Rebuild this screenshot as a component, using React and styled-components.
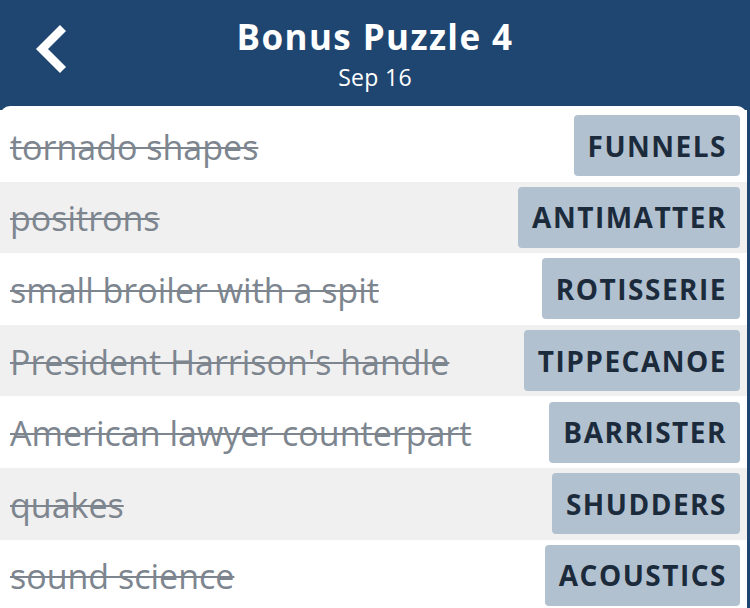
import React from "react";
import styled, { createGlobalStyle } from "styled-components";

const Global = createGlobalStyle`
  html, body { margin: 0; padding: 0; background: #ffffff; }
  body { font-family: "Open Sans", "Liberation Sans", sans-serif; }
  * { box-sizing: border-box; }
`;

const Screen = styled.div`
  width: 750px;
  height: 608px;
  overflow: hidden;
  background: #1f4671;
  display: flex;
  flex-direction: column;
`;

const Header = styled.header`
  height: 106px;
  flex: none;
  display: grid;
  grid-template-columns: 100px 1fr 100px;
  align-items: center;
  color: #ffffff;
`;

const BackButton = styled.button`
  background: none;
  border: none;
  padding: 0 0 0 34px;
  height: 100%;
  display: flex;
  align-items: center;
  justify-content: flex-start;
  cursor: pointer;
  margin-top: -6px;
`;

const TitleBlock = styled.div`
  display: flex;
  flex-direction: column;
  align-items: center;
  margin-top: 0px;
`;

const Title = styled.h1`
  margin: 0;
  font-size: 35px;
  font-weight: 700;
  line-height: 44px;
  letter-spacing: 1.4px;
`;

const Subtitle = styled.div`
  font-size: 23px;
  line-height: 30px;
  margin-top: 3px;
  letter-spacing: 0.3px;
`;

const Card = styled.main`
  flex: 1;
  width: 747px;
  background: #ffffff;
  border-radius: 10px 10px 0 0;
  padding-top: 4px;
`;

const Row = styled.div`
  height: 71.6px;
  display: flex;
  align-items: center;
  justify-content: space-between;
  padding: 0 7px 0 10px;
  background: ${(p) => (p.$shaded ? "#f0f0f0" : "#ffffff")};
`;

const Clue = styled.span`
  font-size: 34px;
  color: #7d858f;
  text-decoration: line-through;
  text-decoration-thickness: 2px;
  white-space: nowrap;
  margin-top: 2px;
`;

const Answer = styled.span`
  height: 61px;
  display: flex;
  align-items: center;
  padding: 0 13px 0 14px;
  background: #b1c1cf;
  color: #1c2b3c;
  font-size: 28px;
  font-weight: 700;
  border-radius: 4px;
  letter-spacing: 1.5px;
`;

const rows = [
  ["tornado shapes", "FUNNELS"],
  ["positrons", "ANTIMATTER"],
  ["small broiler with a spit", "ROTISSERIE"],
  ["President Harrison's handle", "TIPPECANOE"],
  ["American lawyer counterpart", "BARRISTER"],
  ["quakes", "SHUDDERS"],
  ["sound science", "ACOUSTICS"],
];

export default function App() {
  return (
    <>
      <Global />
      <Screen>
        <Header>
          <BackButton aria-label="Back">
            <svg width="34" height="52" viewBox="0 0 34 52">
              <path
                d="M29 4 L8 25 L29 46"
                fill="none"
                stroke="#ffffff"
                strokeWidth="8.5"
                strokeLinejoin="miter"
              />
            </svg>
          </BackButton>
          <TitleBlock>
            <Title>Bonus Puzzle 4</Title>
            <Subtitle>Sep 16</Subtitle>
          </TitleBlock>
          <div />
        </Header>
        <Card>
          {rows.map(([clue, ans], i) => (
            <Row key={ans} $shaded={i % 2 === 1}>
              <Clue>{clue}</Clue>
              <Answer>{ans}</Answer>
            </Row>
          ))}
        </Card>
      </Screen>
    </>
  );
}
